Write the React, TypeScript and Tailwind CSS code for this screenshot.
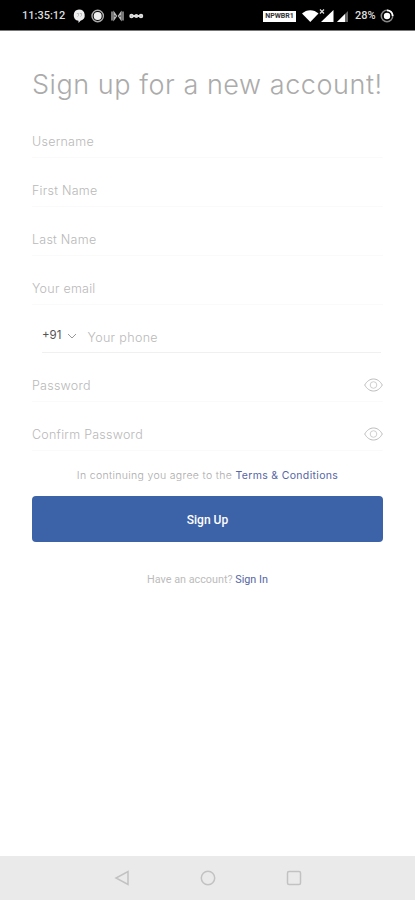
import { useState } from "react";
import type { ReactNode } from "react";

interface FieldProps {
  placeholder: string;
  type?: string;
  children?: ReactNode;
}

function Field({ placeholder, type = "text", children }: FieldProps) {
  return (
    <div className="flex h-[49px] items-center border-b border-[#fafafa] pt-4">
      <input
        type={type}
        placeholder={placeholder}
        aria-label={placeholder}
        className="min-w-0 flex-1 bg-transparent pt-[2px] text-[12.5px] leading-5 font-light tracking-[0.25px] text-gray-700 outline-none placeholder:text-[#b9b9b9]"
      />
      {children}
    </div>
  );
}

function EyeButton({ onClick }: { onClick: () => void }) {
  return (
    <button
      onClick={onClick}
      aria-label="Toggle password"
      className="flex h-5 w-[19px] items-center"
    >
      <svg viewBox="0 0 19 14" className="h-[14px] w-[19px]" fill="none" stroke="#bcbcbc">
        <path d="M.7 7C3 3 6 1 9.500 1S16 3 18.300 7C16 11 13 13 9.500 13S3 11 .7 7Z" />
        <circle cx="9.500" cy="7" r="3.300" stroke="#cfcfcf" />
      </svg>
    </button>
  );
}

function StatusBar() {
  return (
    <header className="flex h-[31px] items-center border-b border-[#777] bg-black pt-[2px] pr-[21px] pl-[22px] font-[Roboto,sans-serif] text-[11px] font-medium text-[#dcdcdc]">
      <span className="w-[43px] pt-px whitespace-nowrap">11:35:12</span>
      <svg viewBox="0 0 76 16" className="ml-2 h-4 w-[76px]" fill="#eee">
        <path d="M6 1.500a5.700 5.700 0 0 1 1.500 11.200L5.500 15v-2.200A5.700 5.700 0 0 1 6 1.500Z" />
        <path d="M3.800 5.500h1.700v2l-1 1.200M6.800 5.500h1.700v2l-1 1.200" stroke="#aaa" strokeWidth=".7" fill="none" />
        <circle cx="24.700" cy="8" r="5.700" fill="none" stroke="#aaa" strokeWidth="1.400" />
        <circle cx="24.700" cy="8" r="4" />
        {/* Two facing brackets around a pulse */}
        <path
          d="M39 3.500v9M50 3.500v9M41 4.500l2.500 3.500L41 11.500v-7Zm7 0L45.500 8l2.500 3.500v-7Z"
          fill="none"
          stroke="#bbb"
          strokeWidth="1.300"
        />
        <g fill="none" stroke="#ddd" strokeWidth="1.900">
          <circle cx="58.500" cy="8" r="1.300" />
          <circle cx="63.300" cy="8" r="1.100" />
          <circle cx="68" cy="8" r="1.300" />
          <path d="M60 8h2M65 8h2" />
        </g>
      </svg>
      <div className="ml-auto flex items-center">
        <span className="flex h-[11px] w-[33px] items-center justify-center bg-white text-[7px] font-bold text-[#333]">
          NPWBR1
        </span>
        <svg viewBox="0 0 48 16" className="ml-[6px] h-4 w-12" fill="#fff">
          <path d="M0 5.500C4.500 1 12 1 16.500 5.500L8.300 14Z" />
          <path d="M19 14 31.500 2v12Z" />
          <path d="m18 1.500 4 4m0-4-4 4" stroke="#ddd" strokeWidth="1.200" />
          <path d="M35 14 46 3v11Z" fill="#666" />
          <path d="M35 14 43 6v8Z" />
        </svg>
        <span className="ml-[5px] w-[21px] pt-px">28%</span>
        <svg viewBox="0 0 14 14" className="ml-1 size-[14px]" fill="none">
          <circle cx="7" cy="7" r="5.700" stroke="#888" strokeWidth="1.500" />
          <path d="M7 1.300A5.700 5.700 0 0 1 12.700 7" stroke="#fff" strokeWidth="1.800" />
          <circle cx="7" cy="7" r="3.200" fill="#fff" />
        </svg>
      </div>
    </header>
  );
}

export default function App() {
  const [visible, setVisible] = useState(false);
  const [confirmVisible, setConfirmVisible] = useState(false);

  return (
    <div className="flex h-[900px] w-[415px] flex-col bg-white font-[Inter,sans-serif]">
      <StatusBar />

      <main className="flex-1 px-8 pt-9">
        <h1 className="text-[27px] leading-9 font-light tracking-[0.55px] whitespace-nowrap text-[#ababab]">
          Sign up for a new account!
        </h1>

        <form className="mt-[6px]" onSubmit={(e) => e.preventDefault()}>
          <Field placeholder="Username" />
          <Field placeholder="First Name" />
          <Field placeholder="Last Name" />
          <Field placeholder="Your email" />

          {/* Phone row with the country code picker */}
          <div className="mr-[2px] ml-[10px] flex h-12 items-center border-b border-[#f0f0f0] pt-4">
            <button className="flex items-center gap-1.5 pb-px text-[11.5px] text-[#555]">
              +91
              <svg viewBox="0 0 10 6" className="h-[6px] w-[10px]" fill="none" stroke="#999">
                <path d="m1 1 4 4 4-4" />
              </svg>
            </button>
            <input
              placeholder="Your phone"
              aria-label="Your phone"
              className="ml-[10px] min-w-0 flex-1 pt-[2px] text-[12.5px] leading-5 font-light tracking-[0.35px] outline-none placeholder:text-[#b9b9b9]"
            />
          </div>

          <Field placeholder="Password" type={visible ? "text" : "password"}>
            <EyeButton onClick={() => setVisible(!visible)} />
          </Field>
          <Field placeholder="Confirm Password" type={confirmVisible ? "text" : "password"}>
            <EyeButton onClick={() => setConfirmVisible(!confirmVisible)} />
          </Field>

          <p className="mt-4 text-center text-[10.5px] leading-[18px] font-light tracking-[0.33px] whitespace-nowrap text-[#aaa]">
            In continuing you agree to the{" "}
            <a href="#" className="font-normal text-[#5565a3]">
              Terms &amp; Conditions
            </a>
          </p>
          <button className="mt-[11px] h-[46px] w-full rounded-[4px] bg-[#3c62a8] pt-[2px] font-[Roboto,sans-serif] text-[12px] font-medium text-white">
            Sign Up
          </button>
        </form>

        <p className="mt-[29px] text-center font-[Roboto,sans-serif] text-[10.8px] leading-[18px] text-[#bcbcbc]">
          Have an account?{" "}
          <a href="#" className="text-[#5565a3]">
            Sign In
          </a>
        </p>
      </main>

      <nav className="flex h-11 items-center justify-center gap-[70px] bg-[#eaeaea]">
        <svg viewBox="0 0 16 16" className="size-4" fill="none" stroke="#c2c2c2" strokeWidth="1.500">
          <path d="M14 1.500v13L2 8Z" />
        </svg>
        <svg viewBox="0 0 16 16" className="size-4" fill="none" stroke="#c2c2c2" strokeWidth="1.500">
          <circle cx="8" cy="8" r="6.700" />
        </svg>
        <svg viewBox="0 0 16 16" className="size-4" fill="none" stroke="#c2c2c2" strokeWidth="1.500">
          <rect x="1.500" y="1.500" width="13" height="13" rx="1.500" />
        </svg>
      </nav>
    </div>
  );
}
